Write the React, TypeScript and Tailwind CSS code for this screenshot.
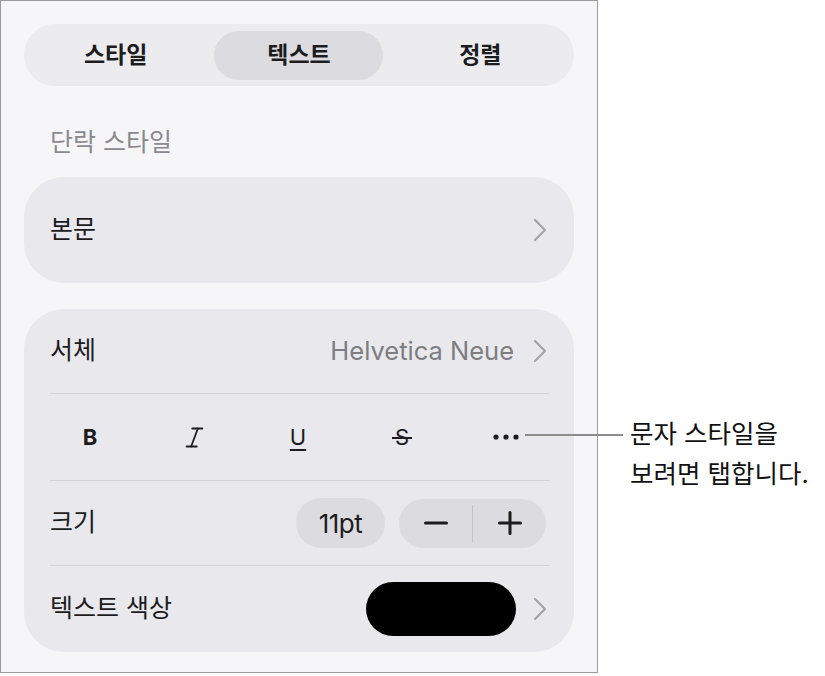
import React from "react";
import { Italic } from "lucide-react";

const FONT = { fontFamily: 'Inter, "Noto Sans CJK KR", sans-serif' };

function Chevron() {
  return (
    <svg width="14" height="24" viewBox="0 0 14 24" fill="none" className="shrink-0">
      <polyline points="2,2 12,12 2,22" stroke="#a3a3a8" strokeWidth="2.2" strokeLinecap="round" strokeLinejoin="round" />
    </svg>
  );
}

function Divider() {
  return <div className="h-px bg-[#d3d3d7] ml-[26px] mr-[25px]" />;
}

export default function App() {
  return (
    <div className="relative w-[825px] h-[676px] bg-white flex text-[#1c1c1e]" style={FONT}>
      <div className="w-[598px] h-[673px] border border-[#9b9b9b] bg-[#f6f6f9] px-[23px] pt-[23px] flex flex-col">
        {/* Segmented control */}
        <div className="h-[62px] rounded-full bg-[#ececef] grid grid-cols-3 items-center px-[6px]">
          <div className="text-center text-[23px] font-semibold pr-[8px]">스타일</div>
          <div className="flex justify-center">
            <div className="w-[169px] h-[49px] rounded-full bg-[#dcdce0] flex items-center justify-center text-[23px] font-semibold">
              텍스트
            </div>
          </div>
          <div className="text-center text-[23px] font-semibold pl-[4px]">정렬</div>
        </div>

        <div className="mt-[43px] pl-[26px] text-[25px] leading-[26px] text-[#8a8a8e]">단락 스타일</div>

        {/* Body style card */}
        <div className="mt-[22px] h-[106px] rounded-[40px] bg-[#e9e9ed] flex items-center justify-between pl-[26px] pr-[27px]">
          <span className="text-[25px]">본문</span>
          <Chevron />
        </div>

        {/* Font card */}
        <div className="mt-[26px] rounded-[40px] bg-[#e9e9ed] flex flex-col">
          <div className="h-[84px] flex items-center justify-between pl-[26px] pr-[27px]">
            <span className="text-[25px]">서체</span>
            <div className="flex items-center gap-[19px]">
              <span className="text-[25.5px] text-[#7d7d82]">Helvetica Neue</span>
              <Chevron />
            </div>
          </div>
          <Divider />
          <div className="h-[86px] px-[14px] grid grid-cols-[repeat(5,104px)] items-center">
            <div className="flex justify-center text-[22px] font-bold">B</div>
            <div className="flex justify-center">
              <Italic size={27} strokeWidth={1.6} color="#1c1c1e" />
            </div>
            <div className="flex justify-center text-[22px] underline underline-offset-[4px] decoration-[2px]">U</div>
            <div className="flex justify-center">
              <span className="relative text-[22px] px-[3px]">
                S
                <span className="absolute left-0 right-0 top-[49%] h-[2px] bg-[#1c1c1e]" />
              </span>
            </div>
            <div className="flex justify-center">
              <svg width="26" height="6" viewBox="0 0 26 6">
                <circle cx="3" cy="3" r="2.6" fill="#1c1c1e" />
                <circle cx="13" cy="3" r="2.6" fill="#1c1c1e" />
                <circle cx="23" cy="3" r="2.6" fill="#1c1c1e" />
              </svg>
            </div>
          </div>
          <Divider />
          <div className="h-[84px] flex items-center justify-between pl-[26px] pr-[28px]">
            <span className="text-[25px]">크기</span>
            <div className="flex items-center gap-[14px]">
              <div className="w-[89px] h-[50px] rounded-full bg-[#dcdce0] flex items-center justify-center text-[26px] tracking-[-0.5px]">11pt</div>
              <div className="w-[147px] h-[49px] rounded-full bg-[#dcdce0] flex items-center">
                <div className="flex-1 flex justify-center">
                  <svg width="24" height="4" viewBox="0 0 24 4">
                    <line x1="1.5" y1="2" x2="22.5" y2="2" stroke="#1c1c1e" strokeWidth="3" strokeLinecap="round" />
                  </svg>
                </div>
                <div className="w-px h-[37px] bg-[#c4c4c8]" />
                <div className="flex-1 flex justify-center">
                  <svg width="24" height="24" viewBox="0 0 24 24">
                    <line x1="1.5" y1="12" x2="22.5" y2="12" stroke="#1c1c1e" strokeWidth="3" strokeLinecap="round" />
                    <line x1="12" y1="1.5" x2="12" y2="22.5" stroke="#1c1c1e" strokeWidth="3" strokeLinecap="round" />
                  </svg>
                </div>
              </div>
            </div>
          </div>
          <Divider />
          <div className="h-[86px] flex items-center justify-between pl-[26px] pr-[27px]">
            <span className="text-[25px]">텍스트 색상</span>
            <div className="flex items-center gap-[17px]">
              <div className="w-[150px] h-[54px] rounded-full bg-black" />
              <Chevron />
            </div>
          </div>
        </div>
      </div>

      {/* Callout */}
      <div className="absolute left-[525px] top-[434px] w-[98px] h-[2px] bg-[#8c8c8c]" />
      <div className="absolute left-[630px] top-[414px] text-[25.5px] leading-[40px] text-[#111111]">
        <div>문자 스타일을</div>
        <div>보려면 탭합니다.</div>
      </div>
    </div>
  );
}
